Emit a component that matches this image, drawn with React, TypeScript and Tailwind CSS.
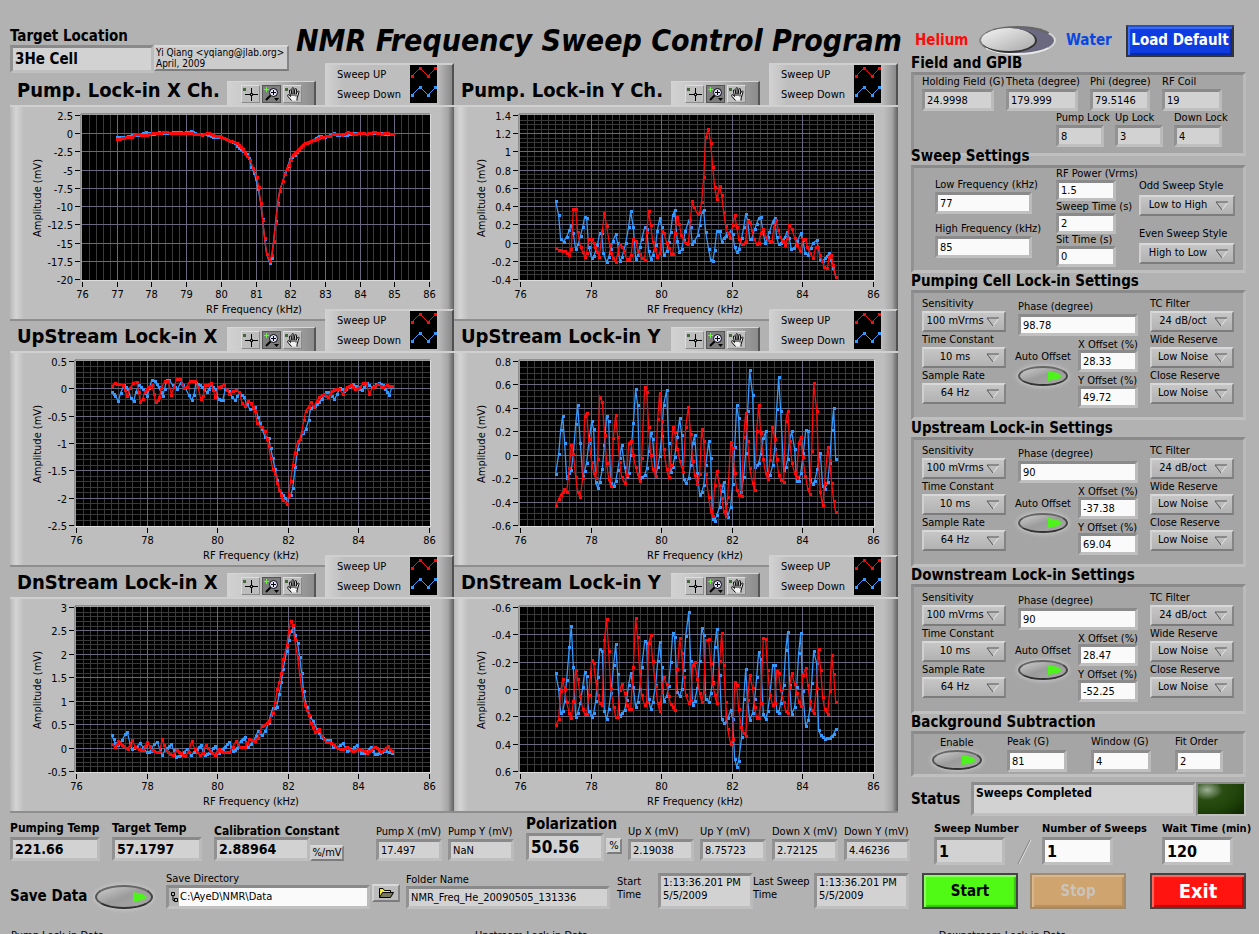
import { useId } from "react";
import { clsx } from "clsx";

type ChartSpec = {
  title: string;
  left: number;
  xTicks: number[];
  xMinor: number;
  yTicks: string[];
  yMinor: number;
  origin: [number, number];
  up: string;
  down: string;
};

type FieldProps = {
  label?: string;
  value: string;
  width: string;
  readOnly?: boolean;
  labelClass?: string;
  inputClass?: string;
};

const everyKhz = [76, 77, 78, 79, 80, 81, 82, 83, 84, 85, 86];
const everyTwo = [76, 78, 80, 82, 84, 86];

// Traces are recorded in thirds of a pixel, relative to each chart's origin.
const charts: ChartSpec[] = [
  {
    title: "Pump. Lock-in X Ch.",
    left: 72,
    xTicks: everyKhz,
    xMinor: 5,
    yTicks: ["2.5", "0", "-2.5", "-5", "-7.5", "-10", "-12.5", "-15", "-17.5", "-20"],
    yMinor: 1,
    origin: [10, 85],
    up: "352,358 378,352 396,350 410,342 435,346 455,340 478,340 496,335 515,340 545,338 575,340 605,344 627,338 640,346 664,350 690,362 710,368 728,388 740,408 750,420 760,445 770,470 776,500 782,548 788,600 794,655 800,703 809,722 815,706 821,664 827,610 833,552 839,512 848,484 854,462 866,434 878,404 890,394 902,382 914,370 932,363 950,357 970,350 990,348 1000,341 1025,344 1045,337 1060,343 1080,338 1100,341 1125,336 1145,341 1165,339 1180,343",
    down: "352,350 378,350 396,345 415,346 438,337 455,343 478,337 500,340 525,335 550,338 572,334 590,342 615,342 632,349 650,352 664,350 690,363 705,370 716,384 728,392 740,403 748,415 754,440 762,458 768,478 775,508 782,550 788,598 794,658 800,703 809,729 815,714 821,662 827,602 833,550 839,514 848,484 856,460 870,418 884,404 902,382 914,370 940,360 956,348 975,352 1003,338 1010,345 1040,344 1070,338 1100,341 1135,338 1160,342 1180,342",
  },
  {
    title: "Pump. Lock-in Y Ch.",
    left: 66,
    xTicks: everyTwo,
    xMinor: 10,
    yTicks: ["1.4", "1.2", "1", "0.8", "0.6", "0.4", "0.2", "0", "-0.2", "-0.4"],
    yMinor: 4,
    origin: [4, 85],
    up: "317,683 326,690 345,693 358,706 364,686 370,568 377,568 383,635 392,682 404,710 410,700 416,658 425,658 436,680 448,710 457,634 463,578 470,618 479,676 482,700 497,727 503,700 509,673 521,690 530,718 537,718 543,705 549,658 557,664 563,690 575,714 584,720 590,637 596,574 602,615 608,665 622,710 630,700 635,634 641,638 650,668 664,702 668,703 674,640 682,590 688,612 694,645 703,666 715,673 721,600 727,544 733,562 743,583 749,577 755,545 761,472 767,352 775,326 782,370 788,440 794,502 800,536 809,499 815,526 821,577 827,617 833,640 841,655 848,614 854,586 860,620 866,656 875,672 880,673 887,662 893,604 900,606 912,656 920,671 926,668 932,640 940,627 947,652 953,661 966,666 972,620 979,601 985,630 991,652 1006,676 1012,655 1018,616 1026,627 1034,655 1042,676 1051,694 1058,657 1066,656 1072,680 1081,700 1090,715 1097,680 1105,682 1111,705 1123,742 1132,745 1138,710 1144,706 1150,735 1157,772",
    down: "317,544 326,586 332,658 341,665 350,650 358,630 364,616 370,640 377,688 385,672 398,622 404,590 410,595 416,680 425,715 432,708 442,676 449,640 455,640 460,700 470,727 476,712 488,664 497,643 503,670 509,724 516,712 527,670 536,620 542,574 550,622 557,718 563,706 575,658 584,622 590,628 596,692 602,718 608,704 617,675 622,632 629,595 635,620 641,706 650,694 662,636 668,586 674,571 682,664 688,696 695,688 706,634 716,602 722,622 727,673 733,664 743,646 749,616 755,576 761,571 767,636 776,688 782,720 788,724 794,690 800,634 809,632 815,666 821,655 832,640 842,634 848,642 854,682 860,697 866,688 875,655 881,622 887,583 893,600 899,658 905,656 914,628 926,594 932,590 938,630 946,670 953,650 958,637 968,605 974,595 980,652 986,673 992,670 1004,652 1012,636 1018,655 1024,688 1033,685 1042,664 1052,640 1058,660 1066,700 1074,704 1082,684 1090,668 1100,661 1105,682 1111,720 1118,722 1126,714 1138,700 1144,720 1150,744 1157,770",
  },
  {
    title: "UpStream Lock-in X",
    left: 66,
    xTicks: everyTwo,
    xMinor: 10,
    yTicks: ["0.5", "0", "-0.5", "-1", "-1.5", "-2", "-2.5"],
    yMinor: 5,
    origin: [10, 31],
    up: "335,199 344,190 358,193 368,194 382,228 390,205 400,188 410,185 421,245 428,238 434,215 446,200 456,194 467,247 478,232 484,205 494,184 505,182 514,224 522,202 530,178 541,178 552,203 560,200 570,182 586,182 594,200 602,236 610,228 616,196 634,190 646,232 656,200 672,193 680,210 688,222 698,214 708,211 718,216 726,248 734,257 744,244 752,248 758,260 764,272 772,310 780,317 786,322 794,332 800,356 806,378 812,415 818,446 826,463 832,488 838,510 844,526 850,540 860,551 866,524 872,482 878,436 884,398 893,364 899,358 905,336 912,300 917,272 926,260 932,247 942,262 950,242 958,230 972,222 984,232 996,212 1008,206 1018,206 1028,222 1040,200 1052,196 1066,208 1080,200 1090,190 1098,190 1108,222 1118,202 1134,192 1150,202 1160,194 1175,199",
    down: "335,217 346,228 355,244 362,218 372,196 384,206 392,234 401,244 408,215 416,196 428,206 442,229 448,205 455,181 464,184 476,202 488,229 494,206 500,180 508,180 518,196 532,208 542,188 556,204 566,224 575,241 582,224 588,190 600,196 612,208 620,217 634,194 646,208 656,238 668,241 676,208 686,212 696,230 706,241 718,216 732,232 740,252 750,268 766,262 774,290 786,326 795,350 806,355 812,384 818,414 826,448 838,510 850,526 862,540 872,526 878,505 886,440 893,388 901,358 908,340 917,328 926,300 932,264 944,258 956,247 966,236 978,216 990,218 1003,238 1012,222 1020,203 1032,212 1046,202 1060,192 1074,202 1086,211 1100,190 1116,202 1136,188 1150,196 1168,226 1175,202",
  },
  {
    title: "UpStream Lock-in Y",
    left: 66,
    xTicks: everyTwo,
    xMinor: 10,
    yTicks: ["0.8", "0.6", "0.4", "0.2", "0", "-0.2", "-0.4", "-0.6"],
    yMinor: 4,
    origin: [4, 31],
    up: "317,559 326,538 332,524 343,508 350,516 358,444 364,374 370,402 377,470 383,517 391,532 398,474 404,287 410,278 416,358 425,425 431,458 437,475 443,418 449,230 457,245 464,346 470,430 476,476 482,498 490,355 497,284 503,350 509,426 515,472 524,490 530,466 536,370 542,364 550,406 557,442 569,484 575,415 584,200 590,215 596,320 602,404 608,448 617,468 623,298 629,218 635,304 641,388 650,448 656,472 662,436 668,322 674,336 682,386 689,422 700,456 707,320 715,262 722,342 728,424 734,466 742,492 749,462 755,328 761,364 767,462 776,532 782,574 788,588 794,494 800,454 809,496 821,572 827,589 833,530 842,367 848,384 854,460 860,511 867,525 875,528 881,350 887,280 893,362 899,445 908,490 914,510 920,334 926,254 932,340 940,418 947,460 953,478 960,420 967,320 974,356 980,418 986,464 992,481 1001,487 1007,304 1013,272 1019,362 1026,428 1034,460 1040,472 1046,368 1052,352 1058,412 1066,468 1074,508 1079,522 1085,394 1091,190 1100,272 1105,418 1111,516 1118,556 1124,488 1133,382 1139,420 1145,490 1151,542 1157,577",
    down: "317,461 326,403 332,331 338,287 344,370 350,475 358,460 364,450 370,402 377,313 383,256 391,368 398,468 404,452 410,428 416,370 425,304 431,328 437,487 443,503 449,487 457,448 463,376 470,287 476,304 482,490 491,498 497,484 503,450 509,415 515,374 524,442 530,472 536,458 542,406 550,310 557,208 563,256 569,475 584,466 590,445 596,394 602,340 608,358 617,468 623,442 629,408 635,348 641,254 650,211 656,368 662,456 668,442 674,410 682,350 689,295 695,344 701,478 707,490 716,475 722,434 728,370 734,346 742,460 749,524 755,517 761,496 767,436 776,364 782,415 788,598 794,604 800,586 809,560 815,514 821,485 827,550 833,590 842,560 848,492 854,382 860,256 866,295 874,515 881,472 887,398 893,274 899,151 908,226 914,440 926,430 932,402 940,355 947,334 953,478 960,466 968,436 974,388 980,268 986,172 992,274 1001,450 1007,442 1013,418 1019,362 1025,334 1034,388 1040,484 1046,484 1052,460 1060,400 1067,331 1074,334 1080,478 1088,493 1094,482 1102,448 1111,400 1118,498 1124,508 1133,487 1139,430 1145,331 1151,265 1157,418",
  },
  {
    title: "DnStream Lock-in X",
    left: 66,
    xTicks: everyTwo,
    xMinor: 10,
    yTicks: ["3", "2.5", "2", "1.5", "1", "0.5", "0", "-0.5"],
    yMinor: 5,
    origin: [10, 37],
    up: "335,553 344,560 355,544 366,556 384,566 396,541 406,560 416,568 428,571 442,547 455,570 470,576 478,576 487,538 498,570 510,582 520,584 530,571 542,580 556,588 566,576 575,544 584,566 600,586 608,580 617,555 630,574 644,584 656,568 670,576 688,577 698,560 708,544 720,560 736,562 748,538 764,542 774,534 786,498 800,490 808,484 818,460 826,425 832,388 838,366 844,338 850,298 860,256 866,214 872,182 878,194 884,238 893,292 899,342 905,388 914,434 926,466 932,488 944,516 958,508 966,528 978,546 994,548 1008,562 1028,568 1040,562 1058,572 1080,566 1102,578 1114,570 1124,560 1144,576 1164,558 1175,574",
    down: "335,526 346,550 355,556 366,540 376,523 382,517 390,550 396,568 410,560 420,550 430,562 440,577 452,572 462,552 472,547 486,586 496,570 514,552 528,590 544,584 560,568 574,586 590,568 602,556 614,586 628,580 646,558 656,580 668,566 688,547 700,572 712,565 722,542 734,532 744,562 752,552 762,540 774,514 786,526 796,514 806,488 812,464 818,445 830,440 838,402 844,366 850,326 860,274 866,240 872,214 880,205 886,226 893,250 899,292 905,340 911,394 920,440 930,470 940,484 950,506 962,530 978,540 990,541 1000,562 1014,560 1028,550 1042,572 1056,568 1070,556 1084,580 1100,576 1112,560 1124,583 1140,578 1158,572 1175,580",
  },
  {
    title: "DnStream Lock-in Y",
    left: 66,
    xTicks: everyTwo,
    xMinor: 10,
    yTicks: ["-0.6", "-0.4", "-0.2", "0", "0.2", "0.4", "0.6"],
    yMinor: 4,
    origin: [4, 37],
    up: "317,496 326,478 332,392 338,358 344,388 350,427 358,460 364,475 370,424 377,331 383,356 391,408 398,446 404,463 410,463 416,406 425,301 431,310 437,362 443,404 449,430 457,436 463,241 470,178 476,272 482,384 491,442 497,470 503,472 509,391 515,373 524,400 530,434 536,448 542,448 550,322 557,175 563,232 569,334 575,406 584,436 590,426 596,250 602,226 608,304 617,379 623,430 629,452 635,396 641,352 650,373 656,409 662,433 674,449 682,328 689,235 695,280 701,352 707,404 716,430 722,420 728,314 734,307 742,356 749,400 755,425 761,397 767,241 776,238 782,310 788,368 794,404 800,430 809,304 815,220 821,314 827,427 833,506 842,553 848,538 854,367 860,374 866,448 874,500 881,520 887,527 893,420 899,346 908,384 914,442 920,475 926,475 932,430 940,235 947,238 953,330 960,404 968,436 974,430 980,334 986,340 992,390 1001,427 1007,452 1013,460 1019,380 1025,340 1034,372 1040,398 1046,426 1052,437 1058,346 1067,325 1074,376 1080,424 1086,450 1091,460 1100,384 1106,268 1112,331 1118,412 1124,448 1133,463 1139,394 1145,286 1151,343 1157,425",
    down: "317,340 326,388 332,460 338,454 344,424 350,360 358,262 364,199 370,322 377,472 383,458 391,430 398,382 404,337 410,349 416,452 425,472 431,460 437,424 443,350 449,268 457,274 463,452 470,478 476,448 483,398 491,314 497,253 503,343 509,469 515,460 524,450 530,420 536,374 542,340 550,382 557,442 563,425 569,388 575,322 584,244 590,250 596,418 602,448 608,427 617,376 623,304 629,247 635,320 641,422 650,409 656,378 662,307 668,220 674,232 682,397 689,409 695,388 701,330 707,229 716,157 722,302 728,434 734,422 742,384 749,304 755,205 761,224 767,418 776,425 782,400 788,366 794,262 800,208 809,346 815,478 821,488 827,487 833,475 842,451 848,478 854,596 860,620 866,602 875,530 881,418 887,328 893,420 899,481 908,458 914,418 920,352 926,277 932,298 940,463 947,478 953,454 960,404 968,316 974,316 980,454 986,460 992,430 1001,376 1007,271 1013,217 1019,376 1025,463 1034,442 1040,382 1046,280 1052,220 1058,392 1067,499 1074,481 1080,446 1085,368 1091,274 1100,310 1106,511 1112,526 1124,536 1139,533 1151,523 1157,508",
  },
];

const lockIns = [
  { title: "Pumping Cell Lock-in Settings", phase: "98.78", x: "28.33", y: "49.72" },
  { title: "Upstream Lock-in Settings", phase: "90", x: "-37.38", y: "69.04" },
  { title: "Downstream Lock-in Settings", phase: "90", x: "28.47", y: "-52.25" },
];

const sunken = "border-3 border-t-[#8a8a8a] border-l-[#929292] border-r-[#bbbbbb] border-b-[#c0c0c0]";
const raised = "border-2 border-t-[#d8d8d8] border-l-[#d0d0d0] border-r-[#858585] border-b-[#7c7c7c]";

function samples(trace: string, [ox, oy]: [number, number]) {
  const points = trace.split(" ").map((pair) => pair.split(",").map(Number));
  const out: [number, number][] = [];
  points.forEach(([x, y], i) => {
    if (i > 0) {
      const [px, py] = points[i - 1];
      const steps = Math.max(1, Math.round((x - px) / 7));
      for (let s = 1; s < steps; s++) {
        out.push([px + ((x - px) * s) / steps, py + ((y - py) * s) / steps]);
      }
    }
    out.push([x, y]);
  });
  return out.map(([x, y]) => [x / 3 - ox, y / 3 - oy] as const);
}

function Trace({ trace, origin, color }: { trace: string; origin: [number, number]; color: string }) {
  const points = samples(trace, origin);
  return (
    <g>
      <polyline points={points.map((p) => p.join(",")).join(" ")} fill="none" stroke={color} strokeWidth="1.3" />
      {points.map(([x, y], i) => (
        <rect key={i} x={Math.round(x) - 1} y={Math.round(y) - 1} width="3" height="3" fill={color} shapeRendering="crispEdges" />
      ))}
    </g>
  );
}

function Chart({ spec }: { spec: ChartSpec }) {
  const { left, xTicks, xMinor, yTicks, yMinor } = spec;
  const right = 420;
  const top = 10;
  const bottom = 175;
  const xCount = (xTicks.length - 1) * xMinor;
  const yCount = (yTicks.length - 1) * yMinor;
  const xAt = (i: number, n: number) => Math.round(left + ((right - 1 - left) * i) / n) + 0.5;
  const yAt = (i: number, n: number) => Math.round(top + ((bottom - 1 - top) * i) / n) + 0.5;
  const minorX = Array.from({ length: xCount + 1 }, (_, i) => i).filter((i) => i % xMinor !== 0);
  const minorY = Array.from({ length: yCount + 1 }, (_, i) => i).filter((i) => i % yMinor !== 0);

  return (
    <svg viewBox="0 0 444 216" className="block w-full fill-black text-[11px]" role="img" aria-label={spec.title}>
      <rect x={left - 1} y={top - 1} width={right - left + 2} height={bottom - top + 2} fill="#dcdcdc" />
      <path d={`M${left - 1} ${bottom}V${top - 1}H${right}`} fill="none" stroke="#606060" />
      <rect x={left} y={top} width={right - left} height={bottom - top} fill="#000" />
      <g stroke="#3a3a3a">
        {minorX.map((i) => <path key={i} d={`M${xAt(i, xCount)} ${top}V${bottom}`} />)}
        {minorY.map((i) => <path key={i} d={`M${left} ${yAt(i, yCount)}H${right}`} />)}
      </g>
      <g stroke="#6b6780">
        {xTicks.slice(1, -1).map((t, i) => <path key={t} d={`M${xAt(i + 1, xTicks.length - 1)} ${top}V${bottom}`} />)}
        {yTicks.slice(1, -1).map((t, i) => <path key={t} d={`M${left} ${yAt(i + 1, yTicks.length - 1)}H${right}`} />)}
      </g>
      {xTicks.map((t, i) => {
        const x = xAt(i, xTicks.length - 1);
        return (
          <g key={t}>
            <path d={`M${x} ${bottom + 2}v5`} stroke="#000" />
            <text x={x} y="193" textAnchor="middle">{t}</text>
          </g>
        );
      })}
      {yTicks.map((t, i) => {
        const y = yAt(i, yTicks.length - 1);
        return (
          <g key={t}>
            <path d={`M${left - 7} ${y}h5`} stroke="#000" />
            <text x={left - 9} y={y + 4} textAnchor="end">{t}</text>
          </g>
        );
      })}
      <text x={(left + right) / 2 - 2} y="208" textAnchor="middle">RF Frequency (kHz)</text>
      <text transform="translate(31 93) rotate(-90)" textAnchor="middle">Amplitude (mV)</text>
      <Trace trace={spec.down} origin={spec.origin} color="#3399ff" />
      <Trace trace={spec.up} origin={spec.origin} color="#ff0a0a" />
    </svg>
  );
}

function PaletteButton({ label, active, children }: { label: string; active?: boolean; children: React.ReactNode }) {
  return (
    <button
      type="button"
      aria-label={label}
      className={clsx(
        "h-[18px] w-[19px] border",
        active ? "border-[#555] bg-[#7d7d7d]" : "border-t-[#dedede] border-l-[#dedede] border-r-[#8a8a8a] border-b-[#8a8a8a] bg-[#bdbdbd]",
      )}
    >
      <svg viewBox="0 0 17 16" className="h-4 w-[17px]" fill="none" stroke="#000">
        {children}
      </svg>
    </button>
  );
}

function GraphPalette() {
  return (
    <div className="flex h-6 w-[89px] items-center gap-0.5 border-t border-t-[#d6d6d6] border-r-2 border-r-[#555] bg-linear-to-r from-[#d2d2d2] via-[#bdbdbd] to-[#8c8c8c] pl-3.5">
      <PaletteButton label="Cursor movement">
        <path d="M1 2h3v3h-3z" fill="#46663c" stroke="none" />
        <path d="M9.500 2v5M9.500 10v5M3 8.500h5M11 8.500h5M8.500 7.500h2v2h-2z" />
      </PaletteButton>
      <PaletteButton label="Zoom" active>
        <path d="M3.500 1v5M1 3.500h5" stroke="#5dff2b" />
        <circle cx="10.500" cy="6.500" r="4" fill="#e3e3ff" />
        <path d="M8 6.500h5M10.500 4v5" />
        <path d="M7.500 9.500L3 14" strokeWidth="2" />
        <path d="M11 12h5l-2.500 3z" fill="#000" stroke="none" />
      </PaletteButton>
      <PaletteButton label="Panning">
        <path d="M1 2h3v3h-3z" fill="#46663c" stroke="none" />
        <path
          d="M7.500 14.500L4 10.500C3 9 4.200 8 5.500 9.300L6.500 10.500L5.500 5C5.300 3.500 6.800 3.300 7.200 4.700L8 8L8 2.700C8 1.200 9.700 1.200 9.800 2.700L10 8L11 3.300C11.400 2 12.800 2.400 12.600 3.700L12 8.300L13.500 5.500C14.200 4.500 15.300 5.200 14.900 6.300L13 12.500V14.500"
          fill="#f2f2f2"
        />
        <path d="M8 8v2M10 8v2M12 8.500v2" />
      </PaletteButton>
    </div>
  );
}

function Swatch({ color }: { color: string }) {
  return (
    <svg viewBox="0 0 27 19" className="h-[19px] w-[27px] bg-black" fill={color}>
      <path d="M2 11L10 3L18 11L26 3" fill="none" stroke={color} />
      <path d="M1 10h3v3h-3zM9 2h3v3h-3zM17 10h3v3h-3zM24 2h3v3h-3z" />
    </svg>
  );
}

function Legend() {
  return (
    <div className="flex h-[42px] w-[129px] border-t-2 border-t-[#cfcfcf] border-r-2 border-r-[#505050] bg-linear-to-r from-[#d2d2d2] via-[#bebebe] via-15% to-[#bebebe] pl-3">
      <div className="flex w-[73px] flex-col leading-5">
        <span>Sweep UP</span>
        <span>Sweep Down</span>
      </div>
      <div className="flex flex-col">
        <Swatch color="#ff0a0a" />
        <Swatch color="#3399ff" />
      </div>
      <div className="flex-1 bg-linear-to-r from-[#bebebe] to-[#8a8a8a]" />
    </div>
  );
}

function Graph({ spec }: { spec: ChartSpec }) {
  return (
    <section className="min-w-0">
      <div className="flex h-[30px] items-end">
        <h3 className="w-[217px] pl-[7px] text-[20px] leading-[30px] font-bold whitespace-nowrap">{spec.title}</h3>
        <GraphPalette />
        <div className="ml-auto">
          <Legend />
        </div>
      </div>
      <div className="border-t-2 border-t-[#d0d0d0] bg-[linear-gradient(to_right,#b8b8b8,#d4d4d4_6px,#bebebe_14px,#bebebe_calc(100%-14px),#a6a6a6_calc(100%-6px),#606060)]">
        <div className="-mt-0.5 border-b-2 border-b-[#8e8e8e]">
          <div className="-mb-0.5">
            <Chart spec={spec} />
          </div>
        </div>
      </div>
    </section>
  );
}

function Field({ label, value, width, readOnly, labelClass = "leading-[14px]", inputClass = "h-[22px]" }: FieldProps) {
  const id = useId();
  return (
    <div className={clsx("flex shrink-0 flex-col", width)}>
      {label && <label htmlFor={id} className={clsx("relative whitespace-nowrap", labelClass)}>{label}</label>}
      <input
        id={id}
        defaultValue={value}
        readOnly={readOnly}
        className={clsx("w-full px-0.5", sunken, readOnly ? "bg-[#d2d2d2]" : "bg-[#fafafa]", inputClass)}
      />
    </div>
  );
}

function Menu({ label, value, width, labelClass = "leading-[15px]" }: { label: string; value: string; width: string; labelClass?: string }) {
  const id = useId();
  return (
    <div className={clsx("flex flex-col", width)}>
      <label htmlFor={id} className={clsx("whitespace-nowrap", labelClass)}>{label}</label>
      <div className="relative">
        <select id={id} className={clsx("block h-[21px] w-full appearance-none bg-linear-to-b from-[#c6c6c6] to-[#b2b2b2] pr-[18px] text-center", raised)}>
          <option>{value}</option>
        </select>
        <svg viewBox="0 0 14 10" className="pointer-events-none absolute top-1.5 right-1.5 h-2.5 w-3.5" fill="none">
          <path d="M13 1L7 9" stroke="#e6e6e6" />
          <path d="M7 9L1 1H13" stroke="#555" />
        </svg>
      </div>
    </div>
  );
}

function OvalSwitch({ id, size }: { id: string; size: string }) {
  return (
    <button
      id={id}
      type="button"
      role="switch"
      aria-checked="true"
      className={clsx(
        "flex items-center justify-end rounded-[50%] border-2 border-t-[#666] border-r-[#444] border-b-[#333] border-l-[#555] bg-linear-to-br from-[#cfcfcf] via-[#9b9b9b] to-[#a8a8a8] pr-1 shadow-[0_0_4px_1px_#c8c8c8]",
        size,
      )}
    >
      <svg viewBox="0 0 14 10" className="h-2.5 w-3.5">
        <path d="M0 0L10 2L14 5L10 8L0 10z" fill="#4df31a" />
      </svg>
    </button>
  );
}

function Panel({ title, className, children }: { title: string; className: string; children: React.ReactNode }) {
  return (
    <section>
      <h2 className="relative z-10 text-[15px] leading-[17px] font-bold whitespace-nowrap">{title}</h2>
      <div className={clsx("flex border-3 border-t-[#8a8a8a] border-l-[#919191] border-r-[#bababa] border-b-[#bfbfbf] bg-[#a5a5a5]", className)}>{children}</div>
    </section>
  );
}

function LockInPanel({ title, phase, x, y }: { title: string; phase: string; x: string; y: string }) {
  const id = useId();
  return (
    <Panel title={title} className="h-[130px] gap-3 pt-[3px] pl-2">
      <div className="flex flex-col">
        <Menu label="Sensitivity" value="100 mVrms" width="w-[84px]" />
        <Menu label="Time Constant" value="10 ms" width="w-[84px]" />
        <Menu label="Sample Rate" value="64 Hz" width="w-[84px]" />
      </div>
      <div className="flex flex-col pt-1">
        <Field label="Phase (degree)" value={phase} width="w-[120px]" />
        <div className="flex justify-between">
          <div className="flex w-[50px] flex-col items-center pt-3.5">
            <label htmlFor={id} className="leading-[14px] whitespace-nowrap">Auto Offset</label>
            <div className="pt-0.5">
              <OvalSwitch id={id} size="h-[20px] w-[50px]" />
            </div>
          </div>
          <div className="flex flex-col">
            <Field label="X Offset (%)" value={x} width="w-[60px]" labelClass="leading-[14px] pt-0.5 -mb-0.5" />
            <Field label="Y Offset (%)" value={y} width="w-[60px]" labelClass="leading-[14px] pt-0.5 -mb-0.5" />
          </div>
        </div>
      </div>
      <div className="flex flex-col">
        <Menu label="TC Filter" value="24 dB/oct" width="w-[84px]" />
        <Menu label="Wide Reserve" value="Low Noise" width="w-[84px]" />
        <Menu label="Close Reserve" value="Low Noise" width="w-[84px]" />
      </div>
    </Panel>
  );
}

function Settings() {
  return (
    <div className="flex min-w-0 flex-col pl-[13px]">
      <header className="flex h-[55px] items-center pt-[26px]">
        <span className="w-[68px] pl-1 text-[15px] font-bold text-[#ff0a0a]">Helium</span>
        <button type="button" role="switch" aria-checked="false" aria-label="Helium or Water" className="h-[29px] w-[77px] rounded-[50%] border-2 border-t-[#666] border-l-[#888] border-r-[#d8d8d8] border-b-[#e8e8e8] bg-[#6b6980]">
          <span className="block h-[25px] w-[56px] rounded-[50%] border-r-2 border-b-2 border-[#333] bg-linear-to-br from-[#f4f4f4] via-[#cfcfcf] to-[#a8a8a8]" />
        </button>
        <span className="w-[70px] pl-2.5 text-[15px] font-bold text-[#0a46e0]">Water</span>
        <button type="button" className="h-8 w-[108px] border-2 border-[#333] border-t-[#2450c8] bg-[#0f3ce0] text-[15px] font-bold whitespace-nowrap text-white shadow-[inset_2px_2px_1px_#3f6cf5,inset_-2px_-2px_1px_#0a28a0]">
          Load Default
        </button>
      </header>
      <div className="flex flex-col pr-[13px]">
        <Panel title="Field and GPIB" className="h-[84px] flex-col pl-2">
          <div className="flex gap-3">
            <Field label="Holding Field (G)" value="24.9998" width="w-[72px]" readOnly />
            <Field label="Theta (degree)" value="179.999" width="w-[72px]" readOnly />
            <Field label="Phi (degree)" value="79.5146" width="w-[60px]" readOnly />
            <Field label="RF Coil" value="19" width="w-[60px]" readOnly />
          </div>
          <div className="flex gap-[11px] pl-[134px]">
            <Field label="Pump Lock" value="8" width="w-[48px]" readOnly />
            <Field label="Up Lock" value="3" width="w-[48px]" readOnly />
            <Field label="Down Lock" value="4" width="w-[48px]" readOnly />
          </div>
        </Panel>
        <div className="-mt-2">
          <Panel title="Sweep Settings" className="h-[108px] pl-[21px]">
            <div className="flex w-[121px] flex-col gap-2 pt-2.5">
              <Field label="Low Frequency (kHz)" value="77" width="w-[97px]" />
              <Field label="High Frequency (kHz)" value="85" width="w-[97px]" />
            </div>
            <div className="flex w-[83px] flex-col">
              <Field label="RF Power (Vrms)" value="1.5" width="w-[60px]" labelClass="leading-[12px]" inputClass="h-[21px]" />
              <Field label="Sweep Time (s)" value="2" width="w-[60px]" labelClass="leading-[12px]" inputClass="h-[21px]" />
              <Field label="Sit Time (s)" value="0" width="w-[60px]" labelClass="leading-[12px]" inputClass="h-[21px]" />
            </div>
            <div className="flex flex-col gap-2 pt-2">
              <Menu label="Odd Sweep Style" value="Low to High" width="w-[96px]" labelClass="leading-[19px]" />
              <Menu label="Even Sweep Style" value="High to Low" width="w-[96px]" labelClass="leading-[19px]" />
            </div>
          </Panel>
        </div>
        {lockIns.map((unit) => <LockInPanel key={unit.title} {...unit} />)}
        <Panel title="Background Subtraction" className="h-[46px] pl-[18px]">
          <div className="flex w-[75px] flex-col pt-0.5">
            <label htmlFor="subtract" className="pl-2 leading-[14px]">Enable</label>
            <OvalSwitch id="subtract" size="h-[20px] w-[50px]" />
          </div>
          <div className="flex gap-6">
            <Field label="Peak (G)" value="81" width="w-[60px]" labelClass="leading-[16px]" />
            <Field label="Window (G)" value="4" width="w-[60px]" labelClass="leading-[16px]" />
            <Field label="Fit Order" value="2" width="w-[48px]" labelClass="leading-[16px]" />
          </div>
        </Panel>
        <div className="flex items-center pt-[5px]">
          <label htmlFor="status" className="w-[60px] text-[15px] font-bold">Status</label>
          <textarea id="status" readOnly defaultValue="Sweeps Completed" className={clsx("h-[34px] min-w-0 flex-1 resize-none overflow-hidden bg-[#d2d2d2] px-0.5 text-[12px] leading-[16px] font-bold", sunken)} />
          <div className="h-[34px] w-[50px] border-2 border-t-[#8a8a8a] border-l-[#8a8a8a] border-r-[#c0c0c0] border-b-[#c0c0c0] bg-[radial-gradient(ellipse_at_20%_20%,#9db096_0%,#2a4d12_30%,#1f430a_60%,#0f2500_100%)]" />
        </div>
      </div>
    </div>
  );
}

const boldLabel = "text-[12px] leading-[17px] font-bold";
const boldInput = "h-6 text-[14px] font-bold";

function Readouts() {
  return (
    <div className="flex h-[41px] items-end pl-[10px]">
      <div className="flex gap-3">
        <Field label="Pumping Temp" value="221.66" width="w-[90px]" labelClass={boldLabel} inputClass={boldInput} readOnly />
        <Field label="Target Temp" value="57.1797" width="w-[90px]" labelClass={boldLabel} inputClass={boldInput} readOnly />
        <div className="self-end">
          <Field label="Calibration Constant" value="2.88964" width="w-[96px]" labelClass="text-[12px] leading-[12px] font-bold" inputClass={boldInput} readOnly />
        </div>
      </div>
      <span className={clsx("mr-8 flex h-4 w-[34px] items-center justify-center bg-[#cccccc]", raised)}>%/mV</span>
      <div className="flex gap-1.5">
        <Field label="Pump X (mV)" value="17.497" width="w-[66px]" readOnly />
        <Field label="Pump Y (mV)" value="NaN" width="w-[66px]" readOnly />
      </div>
      <div className="flex items-center pl-3">
        <Field label="Polarization" value="50.56" width="w-[78px]" labelClass="text-[15px] leading-[18px] font-bold" inputClass="h-7 text-[17px] font-bold" readOnly />
        <span className={clsx("mt-4 ml-0.5 flex h-4 w-4 items-center justify-center bg-[#d2d2d2]", raised)}>%</span>
      </div>
      <div className="flex gap-1.5 pl-1.5">
        <Field label="Up X (mV)" value="2.19038" width="w-[66px]" readOnly />
        <Field label="Up Y (mV)" value="8.75723" width="w-[66px]" readOnly />
        <Field label="Down X (mV)" value="2.72125" width="w-[66px]" readOnly />
        <Field label="Down Y (mV)" value="4.46236" width="w-[66px]" readOnly />
      </div>
    </div>
  );
}

function TimeBox({ id }: { id: string }) {
  return (
    <textarea
      id={id}
      readOnly
      defaultValue={"1:13:36.201 PM\n5/5/2009"}
      className={clsx("block h-9 w-[95px] resize-none overflow-hidden bg-[#d2d2d2] px-0.5 leading-[13px] whitespace-pre", sunken)}
    />
  );
}

function SaveBar() {
  return (
    <div className="flex items-end pt-[11px] pl-[10px]">
      <label htmlFor="save" className="w-[85px] pb-1 text-[15px] leading-[18px] font-bold">Save Data</label>
      <OvalSwitch id="save" size="h-[24px] w-[58px]" />
      <div className="ml-[13px] flex w-[204px] flex-col">
        <label htmlFor="directory" className="leading-[13px]">Save Directory</label>
        <div className={clsx("flex h-6 bg-[#b4b4b4]", sunken)}>
          <svg viewBox="0 0 10 18" className="h-[18px] w-2.5" fill="none" stroke="#000">
            <path d="M2.500 4.500h3v3h-3zM4 7.500v5h2M5.500 10.500h3v3h-3z" />
          </svg>
          <input id="directory" defaultValue="C:\AyeD\NMR\Data" className="min-w-0 flex-1 bg-[#fafafa] px-px" />
        </div>
      </div>
      <button type="button" aria-label="Browse" className={clsx("mr-1.5 mb-[7px] ml-0.5 flex h-[18px] w-[28px] items-center justify-center bg-[#bdbdbd]", raised)}>
        <svg viewBox="0 0 16 12" className="h-3 w-4" stroke="#000">
          <path d="M1.500 10.500V1.500H5L6.500 3.500H12.500V5.500" fill="#f4e83a" />
          <path d="M1.500 10.500L4.500 5.500H15.500L12.500 10.500z" fill="#77775a" />
        </svg>
      </button>
      <Field label="Folder Name" value="NMR_Freq_He_20090505_131336" width="w-[204px]" labelClass="leading-[13px]" inputClass="h-[23px]" readOnly />
      <div className="flex pl-[7px]">
        <label htmlFor="started" className="w-[41px] pt-0.5 leading-[13px]">Start<br />Time</label>
        <TimeBox id="started" />
        <label htmlFor="swept" className="w-[61px] pt-0.5 leading-[13px] whitespace-nowrap">Last Sweep<br />Time</label>
        <TimeBox id="swept" />
      </div>
    </div>
  );
}

function RunControls() {
  const label = "text-[11px] leading-[17px] font-bold";
  const input = "h-7 text-[16px] font-bold";
  return (
    <div className="flex flex-col gap-2 pl-[11px]">
      <div className="flex items-end pl-3">
        <Field label="Sweep Number" value="1" width="w-[71px]" labelClass={label} inputClass={input} readOnly />
        <svg viewBox="0 0 37 28" className="h-7 w-[37px]" fill="none">
          <path d="M13 27L25 3" stroke="#777" />
          <path d="M14 27L26 3" stroke="#ddd" />
        </svg>
        <Field label="Number of Sweeps" value="1" width="w-[71px]" labelClass={label} inputClass={input} />
        <div className="pl-[49px]">
          <Field label="Wait Time (min)" value="120" width="w-[71px]" labelClass={label} inputClass={input} />
        </div>
      </div>
      <div className="flex">
        <button type="button" className="h-9 w-24 border-2 border-[#444] bg-[#50fa14] text-[15px] font-bold shadow-[inset_2px_2px_1px_#8cff60,inset_-2px_-2px_1px_#37c20a]">Start</button>
        <button type="button" disabled className="ml-3 h-9 w-24 border-2 border-[#a08c6c] bg-[#cfa46e] text-[15px] font-bold text-[#c9c3ba] shadow-[inset_2px_2px_1px_#d9b88c,inset_-2px_-2px_1px_#b98f5c]">Stop</button>
        <button type="button" className="ml-6 h-9 w-24 border-2 border-[#444] bg-[#ff1410] text-[20px] leading-none font-bold text-white shadow-[inset_2px_2px_1px_#ff6a60,inset_-2px_-2px_1px_#c00a08]">Exit</button>
      </div>
    </div>
  );
}

export default function App() {
  return (
    <main className="h-screen overflow-hidden bg-[#b2b2b2] font-['DejaVu_Sans_Condensed','DejaVu_Sans',sans-serif] text-[11px] text-black">
      <div className="grid grid-cols-[898fr_361fr]">
        <div className="min-w-0 pl-[10px]">
          <header className="flex h-[75px]">
            <div className="pt-7">
              <Field label="Target Location" value="3He Cell" width="w-[144px]" labelClass="text-[15px] leading-[17px] font-bold" inputClass="h-7 text-[15px] font-bold" readOnly />
            </div>
            <p className={clsx("mt-[45px] h-[26px] w-[135px] shrink-0 bg-[#cccccc] text-[10px] leading-[11px] whitespace-nowrap", raised)}>
              Yi Qiang &lt;yqiang@jlab.org&gt;<br />April, 2009
            </p>
            <h1 className="pt-[21px] pl-[7px] text-[30px] leading-10 font-bold whitespace-nowrap italic">NMR Frequency Sweep Control Program</h1>
          </header>
          <div className="grid grid-cols-2">
            {charts.map((spec) => <Graph key={spec.title} spec={spec} />)}
          </div>
        </div>
        <Settings />
      </div>
      <div className="grid grid-cols-[911fr_348fr] pt-1">
        <div className="min-w-0">
          <Readouts />
          <SaveBar />
        </div>
        <RunControls />
      </div>
      <div className="grid grid-cols-[468fr_468fr_323fr] pt-5 pl-[11px] leading-[14px] whitespace-nowrap">
        <span>Pump Lock-in Data</span>
        <span>Upstream Lock-in Data</span>
        <span>Downstream Lock-in Data</span>
      </div>
    </main>
  );
}
